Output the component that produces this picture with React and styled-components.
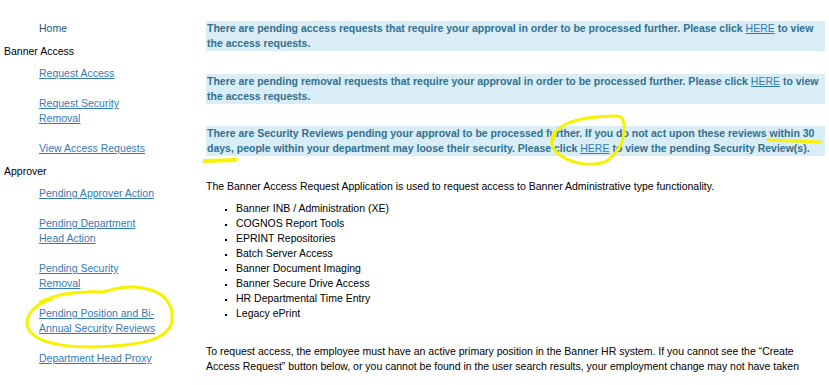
import React from "react";
import styled, { createGlobalStyle } from "styled-components";

const GlobalStyle = createGlobalStyle`
  body {
    margin: 0;
    background: #fff;
    font-family: "Liberation Sans", Arial, sans-serif;
    font-size: 10.5px;
    line-height: 15px;
    color: #000;
  }
`;

const Page = styled.div`
  position: relative;
  display: flex;
  width: 829px;
  height: 385px;
  overflow: hidden;
`;

const Sidebar = styled.nav`
  width: 202px;
  flex: none;
  padding: 13.5px 0 0 4px;
`;

const Heading = styled.div`
  color: #000;
`;

const NavList = styled.ul`
  list-style: none;
  margin: 0;
  padding: 0;
`;

const NavItem = styled.li`
  padding: 7.5px 0 7.5px 35px;
  width: 121px;
`;

const NavLink = styled.a`
  color: ${p => (p.$plain ? "#23527c" : "#337ab7")};
  text-decoration: ${p => (p.$plain ? "none" : "underline")};
  cursor: pointer;
`;

const Main = styled.main`
  flex: 1;
  padding: 21px 4px 0 0;
`;

const Alert = styled.div`
  background: #d9edf7;
  color: #31708f;
  font-weight: bold;
  padding: 0 4px 0 1px;
  margin-bottom: 22.5px;
`;

const HereLink = styled.a`
  color: #337ab7;
  font-weight: normal;
  text-decoration: underline;
`;

const Para = styled.p`
  margin: 0;
`;

const Bullets = styled.ul`
  margin: 7px 0 23px;
  padding-left: 30px;
  list-style: square;

  li::marker {
    font-size: 8px;
  }
`;

const Marker = styled.svg`
  position: absolute;
  left: 0;
  top: 0;
  pointer-events: none;
`;

const navGroups = [
  { heading: null, links: [{ label: "Home", plain: true }] },
  {
    heading: "Banner Access",
    links: [
      { label: "Request Access" },
      { label: "Request Security Removal" },
      { label: "View Access Requests" },
    ],
  },
  {
    heading: "Approver",
    links: [
      { label: "Pending Approver Action" },
      { label: "Pending Department Head Action" },
      { label: "Pending Security Removal" },
      { label: "Pending Position and Bi-Annual Security Reviews" },
      { label: "Department Head Proxy" },
    ],
  },
];

const systems = [
  "Banner INB / Administration (XE)",
  "COGNOS Report Tools",
  "EPRINT Repositories",
  "Batch Server Access",
  "Banner Document Imaging",
  "Banner Secure Drive Access",
  "HR Departmental Time Entry",
  "Legacy ePrint",
];

const App = () => (
  <Page>
    <GlobalStyle />
    <Sidebar>
      {navGroups.map((group, i) => (
        <div key={i}>
          {group.heading && <Heading>{group.heading}</Heading>}
          <NavList>
            {group.links.map(link => (
              <NavItem key={link.label}>
                <NavLink $plain={link.plain}>{link.label}</NavLink>
              </NavItem>
            ))}
          </NavList>
        </div>
      ))}
    </Sidebar>
    <Main>
      <Alert>
        There are pending access requests that require your approval in order to be processed
        further. Please click <HereLink>HERE</HereLink> to view the access requests.
      </Alert>
      <Alert>
        There are pending removal requests that require your approval in order to be processed
        further. Please click <HereLink>HERE</HereLink> to view the access requests.
      </Alert>
      <Alert>
        There are Security Reviews pending your approval to be processed further. If you do not act
        upon these reviews within 30 days, people within your department may loose their security.
        Please click <HereLink>HERE</HereLink> to view the pending Security Review(s).
      </Alert>
      <Para>
        The Banner Access Request Application is used to request access to Banner Administrative
        type functionality.
      </Para>
      <Bullets>
        {systems.map(s => (
          <li key={s}>{s}</li>
        ))}
      </Bullets>
      <Para>
        To request access, the employee must have an active primary position in the Banner HR
        system. If you cannot see the “Create Access Request” button below, or you cannot be found
        in the user search results, your employment change may not have taken
      </Para>
    </Main>
    <Marker width="829" height="385" viewBox="0 0 829 385">
      <g fill="none" stroke="#f7f200" strokeWidth="3" strokeLinecap="round" strokeLinejoin="round">
        <path d="M40 302 C 60 292, 85 291, 103 292 C 112 290, 120 286, 135 287 C 160 289, 174 300, 172 320 C 170 340, 140 346, 90 347 C 55 347, 28 340, 27 323 C 27 312, 38 303, 52 299" />
        <path d="M553 140 C 553 128, 570 119, 597 117 C 610 116, 622 114, 623 120 C 627 132, 622 152, 605 162 C 590 167, 570 164, 556 152 C 551 146, 550 138, 555 132" />
        <path d="M768 140 C 790 141, 805 141, 820 142" />
      </g>
      <path d="M205 161 L 235 160" stroke="#f7f200" strokeWidth="4" strokeLinecap="square" />
    </Marker>
  </Page>
);

export default App;
